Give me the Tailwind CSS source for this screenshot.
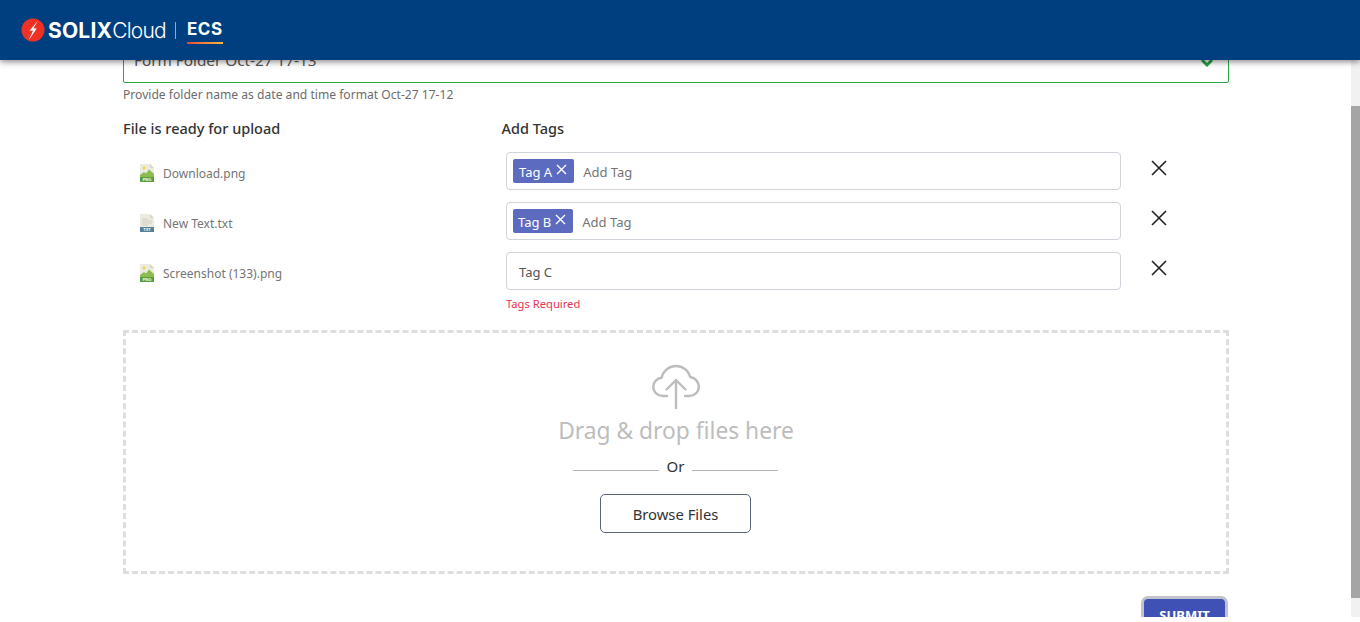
<!DOCTYPE html>
<html>
<head>
<meta charset="utf-8">
<script src="https://cdn.jsdelivr.net/npm/@tailwindcss/browser@4"></script>
</head>
<body class="bg-white overflow-hidden font-['Noto_Sans',sans-serif]">
<div class="relative flex h-[617px] w-[1360px] flex-col overflow-hidden">
  <header class="relative z-10 flex h-[60px] shrink-0 items-center bg-[#003f7f] pl-[21px] shadow-[0_2px_6px_rgba(0,0,0,0.45)]">
    <svg width="24" height="24" viewBox="0 0 24 24" class="shrink-0"><circle cx="12" cy="12" r="11.5" fill="#ee3124"/><path d="M17 2.5 L8.5 12.8 L12 12.8 L7.5 22.5 L15.8 10.5 L12.4 10.5 Z" fill="#fff"/></svg>
    <span class="ml-[3px] font-['Inter',sans-serif] text-[21px] font-bold leading-none tracking-[0.2px] text-white">SOLIX</span><span class="font-['Inter',sans-serif] text-[21px] font-light leading-none tracking-[-0.8px] text-white">Cloud</span>
    <span class="ml-[9px] h-[17px] w-px bg-[#8fa9c6]"></span>
    <span class="ml-[11px] flex flex-col items-stretch">
      <span class="mt-[2px] font-['Inter',sans-serif] text-[17px] font-bold leading-[20px] tracking-[0.6px] text-white">ECS</span>
      <span class="mt-[3px] h-[2px] w-[36px] bg-gradient-to-r from-[#ea4335] to-[#f6b73c]"></span>
    </span>
  </header>
  <div class="absolute right-0 top-[60px] bottom-0 flex w-[9px] flex-col bg-[#f1f1f1]">
    <div class="mt-[46px] h-[492px] w-full bg-[#a5a5a5]"></div>
  </div>
  <main class="ml-[123px] w-[1106px]">
    <div class="-mt-[15px] flex h-[38px] w-full items-center justify-between rounded-[2px] border border-[#28a745] pl-[10px] pr-[14px]">
      <span class="-mt-[9px] text-[15.3px] leading-[20px] text-[#555]">Form Folder Oct-27 17-13</span>
      <svg class="-mt-[6px]" width="14" height="14" viewBox="0 0 14 14"><path d="M2 6 L7 11 L12 6" fill="none" stroke="#23a047" stroke-width="3"/></svg>
    </div>
    <p class="mt-[3px] text-[12.1px] leading-[18px] text-[#6c6c6c]">Provide folder name as date and time format Oct-27 17-12</p>
    <div class="mt-[14px] flex text-[14.5px] font-medium leading-[20px] text-[#333]">
      <span class="w-[378.5px]">File is ready for upload</span>
      <span>Add Tags</span>
    </div>
    <div class="mt-[14px] flex h-[38px] items-start">
      <div class="flex w-[383px] items-center pl-[17px] pt-[12px]">
        <svg width="14" height="18" viewBox="0 0 14 18"><path d="M0 0H10L14 4V18H0Z" fill="#ecebe0"/><path d="M0 13V11L4 8L6 9.5L9 5.5L14 10V13Z" fill="#8cbb52"/><circle cx="4" cy="4" r="1.4" fill="#f5d33f"/><rect y="13" width="14" height="5" fill="#5c9e38"/><text x="7" y="17" text-anchor="middle" font-size="4" font-weight="700" fill="#fff" font-family="Liberation Sans">PNG</text><path d="M10 0L14 4H10Z" fill="#d8d7ca"/></svg>
        <span class="ml-[9px] translate-y-px text-[12px] leading-[18px] text-[#757575]">Download.png</span>
      </div>
      <div class="flex h-[38px] w-[615px] items-center rounded-[4px] border border-[#ced4da] pl-[6px]">
        <span class="flex h-[24px] items-center rounded-[2px] bg-[#5c6bc0] pl-[6px] pr-[7px] text-[13px] text-white"><span class="mt-[4px]">Tag A</span><svg class="ml-[4px] -mt-[3px]" width="11" height="11" viewBox="0 0 11 11"><path d="M1 1L10 10M10 1L1 10" stroke="#fff" stroke-width="1.4"/></svg></span>
        <span class="ml-[9px] mt-[4px] text-[13px] text-[#757575]">Add Tag</span>
      </div>
      <svg class="ml-[30px] mt-[8px]" width="16" height="16" viewBox="0 0 16 16"><path d="M1 1L15 15M15 1L1 15" stroke="#222" stroke-width="1.6"/></svg>
    </div>
    <div class="mt-[12px] flex h-[38px] items-start">
      <div class="flex w-[383px] items-center pl-[17px] pt-[12px]">
        <svg width="14" height="18" viewBox="0 0 14 18"><path d="M0 0H10L14 4V18H0Z" fill="#ecebe0"/><path d="M2 5H8M2 7H12M2 9H12M2 11H8" stroke="#cfcec2" stroke-width="1"/><rect y="13" width="14" height="5" fill="#55809c"/><text x="7" y="17" text-anchor="middle" font-size="4" font-weight="700" fill="#fff" font-family="Liberation Sans">TXT</text><path d="M10 0L14 4H10Z" fill="#d8d7ca"/></svg>
        <span class="ml-[9px] translate-y-px text-[12px] leading-[18px] text-[#757575]">New Text.txt</span>
      </div>
      <div class="flex h-[38px] w-[615px] items-center rounded-[4px] border border-[#ced4da] pl-[6px]">
        <span class="flex h-[24px] items-center rounded-[2px] bg-[#5c6bc0] pl-[5px] pr-[7px] text-[13px] text-white"><span class="mt-[4px]">Tag B</span><svg class="ml-[4px] -mt-[3px]" width="11" height="11" viewBox="0 0 11 11"><path d="M1 1L10 10M10 1L1 10" stroke="#fff" stroke-width="1.4"/></svg></span>
        <span class="ml-[9px] mt-[4px] text-[13px] text-[#757575]">Add Tag</span>
      </div>
      <svg class="ml-[30px] mt-[8px]" width="16" height="16" viewBox="0 0 16 16"><path d="M1 1L15 15M15 1L1 15" stroke="#222" stroke-width="1.6"/></svg>
    </div>
    <div class="mt-[12px] flex h-[38px] items-start">
      <div class="flex w-[383px] items-center pl-[17px] pt-[12px]">
        <svg width="14" height="18" viewBox="0 0 14 18"><path d="M0 0H10L14 4V18H0Z" fill="#ecebe0"/><path d="M0 13V11L4 8L6 9.5L9 5.5L14 10V13Z" fill="#8cbb52"/><circle cx="4" cy="4" r="1.4" fill="#f5d33f"/><rect y="13" width="14" height="5" fill="#5c9e38"/><text x="7" y="17" text-anchor="middle" font-size="4" font-weight="700" fill="#fff" font-family="Liberation Sans">PNG</text><path d="M10 0L14 4H10Z" fill="#d8d7ca"/></svg>
        <span class="ml-[9px] translate-y-px text-[12px] leading-[18px] text-[#757575]">Screenshot (133).png</span>
      </div>
      <div class="flex h-[38px] w-[615px] items-center rounded-[4px] border border-[#ced4da] pl-[12px]">
        <span class="mt-[4px] text-[13px] text-[#555]">Tag C</span>
      </div>
      <svg class="ml-[30px] mt-[8px]" width="16" height="16" viewBox="0 0 16 16"><path d="M1 1L15 15M15 1L1 15" stroke="#222" stroke-width="1.6"/></svg>
    </div>
    <p class="ml-[383px] mt-[5px] text-[11.2px] leading-[18px] text-[#e53450]">Tags Required</p>
    <section class="mt-[17px] flex h-[244px] flex-col items-center border-[3px] border-dashed border-[#dedede] pt-[31px]">
      <svg width="48" height="46" viewBox="0 0 48 46" fill="none" stroke="#bdbdbd" stroke-width="2.4" stroke-linecap="round" stroke-linejoin="round"><path d="M15 32H11C5.5 32 1.3 28 1.3 22.8 1.3 18 5 14.2 9.6 13.7 11 7 17 2 24 2 31 2 36.6 6.6 38.2 13 43.2 13.8 46.8 18 46.8 22.8 46.8 28 42.5 32 37 32H33"/><path d="M24 44V16M14.5 25.5L24 16L33.5 25.5"/></svg>
      <p class="mt-[5px] text-[22.8px] leading-[32px] text-[#bdbdbd]">Drag &amp; drop files here</p>
      <div class="mt-[9px] -ml-px flex items-center text-[15px] leading-[20px] text-[#333]">
        <span class="mt-[8px] h-px w-[86px] bg-[#b5b5b5]"></span><span class="mx-[8px]">Or</span><span class="mt-[8px] h-px w-[86px] bg-[#b5b5b5]"></span>
      </div>
      <button class="mt-[18px] -ml-px flex h-[39px] w-[151px] items-center justify-center rounded-[5px] border border-[#5a6478] pt-[2px] text-[14.8px] text-[#333]">Browse Files</button>
    </section>
    <div class="mt-[22px] mr-px flex justify-end">
      <button class="h-[40px] w-[87px] rounded-[7px] border-[3px] border-[#bfc3cc] bg-[#3f51b5] text-[13px] font-bold text-white">SUBMIT</button>
    </div>
  </main>
</div>
</body>
</html>
